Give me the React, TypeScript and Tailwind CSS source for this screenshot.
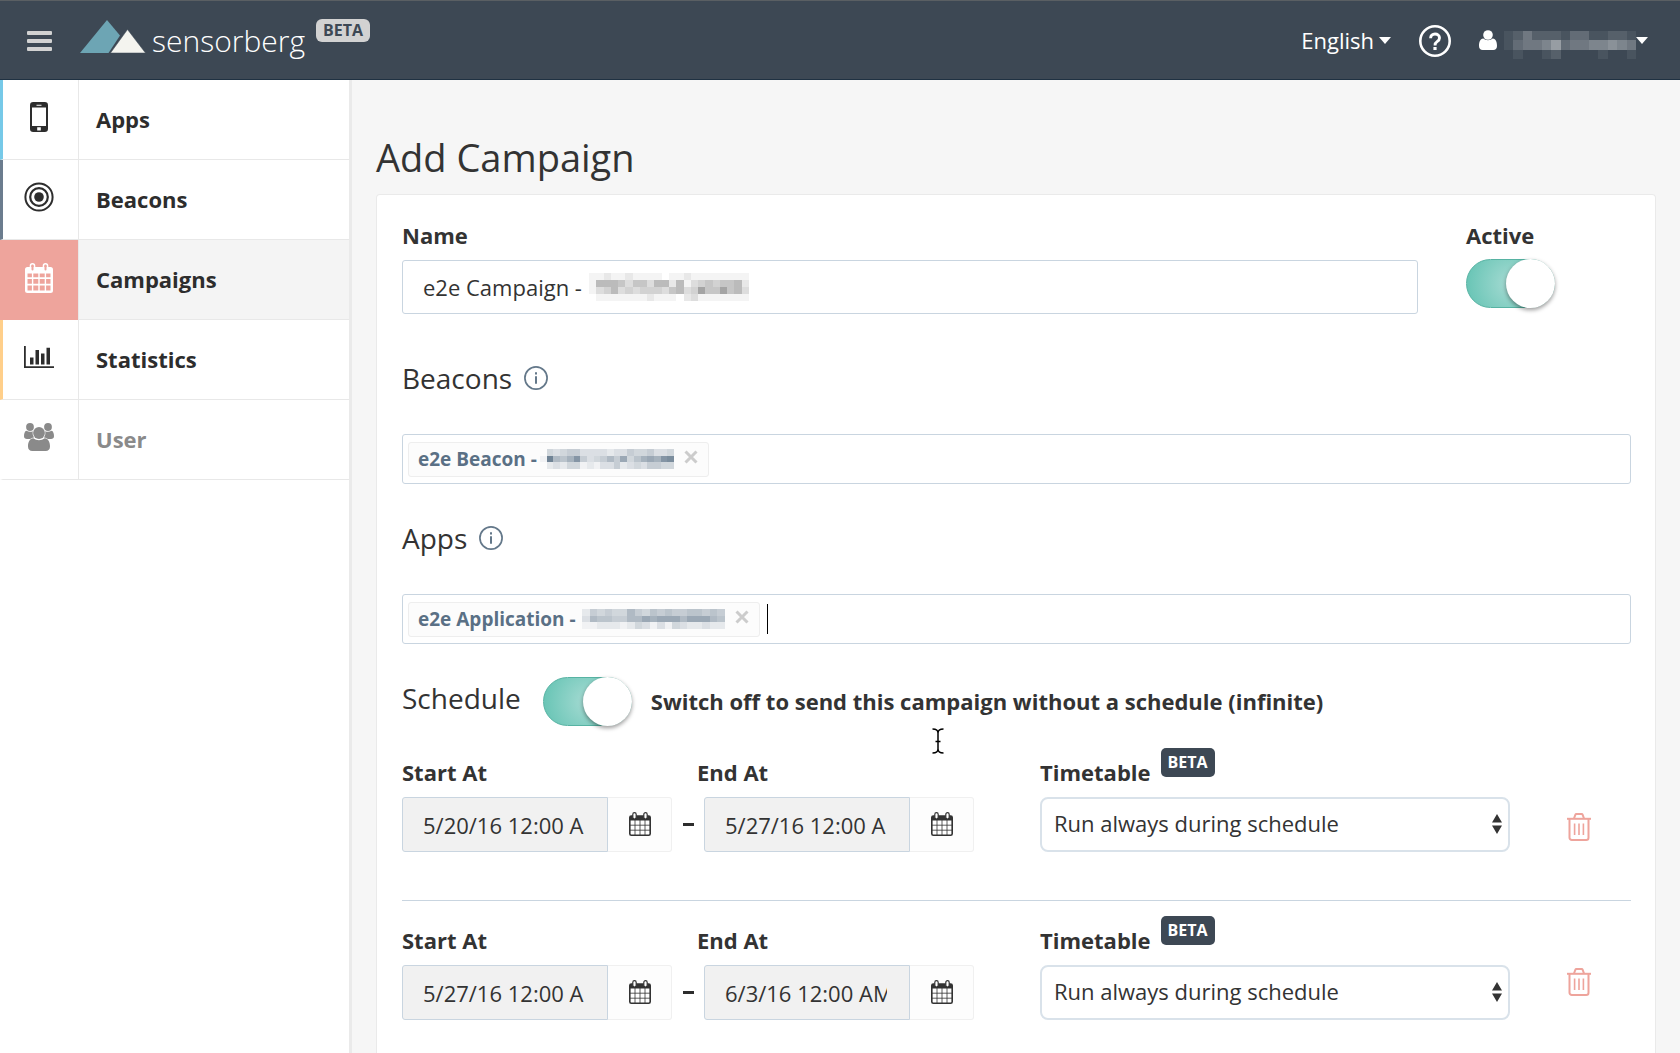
import React from "react";

type IconProps = { className?: string };

function PhoneIcon({ className }: IconProps) {
  return (
    <svg viewBox="0 0 18 30" className={className} fill="currentColor" aria-hidden="true">
      <path
        fillRule="evenodd"
        d="M3.2 0h11.6A3.2 3.2 0 0 1 18 3.2v23.6a3.2 3.2 0 0 1-3.2 3.2H3.2A3.2 3.2 0 0 1 0 26.800V3.200A3.200 3.200 0 0 1 3.200 0zM2 5.500v18.500h14V5.500zM6.500 2.700v1h5v-1zM7.200 25.300v3.200h3.600v-3.200z"
      />
    </svg>
  );
}

function TargetIcon({ className }: IconProps) {
  return (
    <svg viewBox="0 0 30 30" className={className} fill="none" stroke="currentColor" aria-hidden="true">
      <circle cx="15" cy="15" r="13.6" strokeWidth="2" />
      <circle cx="15" cy="15" r="8.800" strokeWidth="2.200" />
      <circle cx="15" cy="15" r="4.800" fill="currentColor" stroke="none" />
    </svg>
  );
}

function CalendarIcon({ className }: IconProps) {
  return (
    <svg viewBox="0 0 28 30" className={className} aria-hidden="true">
      <path
        fill="currentColor"
        fillRule="evenodd"
        d="M2.500 4h23A2.500 2.500 0 0 1 28 6.500v21a2.500 2.500 0 0 1-2.500 2.500h-23A2.500 2.500 0 0 1 0 27.500v-21A2.500 2.500 0 0 1 2.500 4zM2.500 10.500v3.800h4.400v-3.800zM8.300 10.500v3.800h5v-3.800zM14.700 10.500v3.800h5v-3.800zM21.100 10.500v3.800h4.400v-3.800zM2.500 16v4.800h4.400V16zM8.300 16v4.800h5V16zM14.700 16v4.800h5V16zM21.100 16v4.800h4.400V16zM2.500 22.500v5h4.400v-5zM8.300 22.500v5h5v-5zM14.700 22.500v5h5v-5zM21.100 22.500v5h4.400v-5z"
      />
      <rect x="5.500" y="0.800" width="4" height="7.500" rx="2" fill="none" stroke="currentColor" strokeWidth="1.600" />
      <rect x="18.500" y="0.800" width="4" height="7.500" rx="2" fill="none" stroke="currentColor" strokeWidth="1.600" />
      <rect x="6.500" y="2" width="2" height="5.500" rx="1" fill="#eea49c" />
      <rect x="19.500" y="2" width="2" height="5.500" rx="1" fill="#eea49c" />
    </svg>
  );
}

/* The lighter calendar of the date pickers: solid top bar, thin grid. */
function DateIcon({ className }: IconProps) {
  return (
    <svg viewBox="0 0 22 24" className={className} aria-hidden="true">
      <rect x="0.800" y="4" width="20.400" height="19.200" rx="1.500" fill="#ffffff" stroke="currentColor" strokeWidth="1.600" />
      <path d="M1 4h20v4.500H1z" fill="currentColor" />
      <path d="M6 8v15M11 8v15M16 8v15M1 13.200h20M1 18.200h20" stroke="currentColor" strokeWidth="0.800" />
      <rect x="3.800" y="0.700" width="3.400" height="6.300" rx="1.700" fill="#ffffff" stroke="currentColor" strokeWidth="1.200" />
      <rect x="14.800" y="0.700" width="3.400" height="6.300" rx="1.700" fill="#ffffff" stroke="currentColor" strokeWidth="1.200" />
    </svg>
  );
}

function ChartIcon({ className }: IconProps) {
  return (
    <svg viewBox="0 0 30 22" className={className} fill="currentColor" aria-hidden="true">
      <path d="M0 0h1.800v20.300H30V22H0zM6 11.500h3.500V18.500H6zM11.500 4H15v14.500h-3.500zM17 7.500h3.500v11H17zM22.500 1.800H26v16.700h-3.500z" />
    </svg>
  );
}

function GroupIcon({ className }: IconProps) {
  return (
    <svg viewBox="0 0 30 28" className={className} fill="currentColor" aria-hidden="true">
      <circle cx="6" cy="4" r="3.900" />
      <circle cx="24" cy="4" r="3.900" />
      <path d="M2.500 7.800C4.500 9 7 9.200 8.800 8.200c-.5 2.500 0 4.600 1.500 6.300-1.600 0-3 .5-4 1.500H3C1.200 16 0 15 0 13.200 0 10.800.7 8 2.500 7.800zM27.500 7.800c-2 1.200-4.500 1.400-6.300.4.500 2.500 0 4.600-1.500 6.300 1.600 0 3 .5 4 1.500H27c1.800 0 3-1 3-2.800 0-2.400-.7-5.200-2.500-5.400z" />
      <circle cx="15" cy="10" r="5.900" />
      <path d="M9.300 15.200c3.200 2.600 8.200 2.600 11.400 0 3.800.3 5.300 4.300 5.300 8.300 0 2.800-1.700 4.500-4.300 4.500H8.300C5.700 28 4 26.300 4 23.500c0-4 1.500-8 5.300-8.300z" />
    </svg>
  );
}

function PersonIcon({ className }: IconProps) {
  return (
    <svg viewBox="0 0 18 20" className={className} fill="currentColor" aria-hidden="true">
      <circle cx="9" cy="5" r="4.800" />
      <path d="M4.300 8.600c2.800 2.300 6.600 2.300 9.400 0C17 8.800 18 12.500 18 16c0 2.400-1.500 4-3.700 4H3.700C1.500 20 0 18.400 0 16c0-3.500 1-7.200 4.300-7.400z" />
    </svg>
  );
}

function InfoIcon() {
  return (
    <svg viewBox="0 0 24 24" className="size-6 text-[#64788a]" fill="none" stroke="currentColor" aria-hidden="true">
      <circle cx="12" cy="12" r="11.100" strokeWidth="1.700" />
      <path d="M12 10.200v7.600" strokeWidth="2" />
      <path d="M12 6.300v2.200" strokeWidth="2" />
    </svg>
  );
}

function HelpIcon() {
  return (
    <svg viewBox="0 0 32 32" className="size-8" fill="none" stroke="currentColor" aria-hidden="true">
      <circle cx="16" cy="16" r="14.700" strokeWidth="2.600" />
      <path d="M11.600 13.200c0-2.600 1.900-4.200 4.400-4.200s4.500 1.500 4.500 3.900c0 1.900-1.100 2.800-2.400 3.700-1.200.8-2 1.500-2 3.400v.6" strokeWidth="2.900" />
      <path d="M16 22v3" strokeWidth="3.200" />
    </svg>
  );
}

function TrashIcon() {
  return (
    <svg viewBox="0 0 24 28" className="h-7 w-6" fill="none" stroke="currentColor" strokeWidth="2" aria-hidden="true">
      <path d="M0 5.800h24" />
      <path d="M2.500 5.800v18.900a2.300 2.300 0 0 0 2.300 2.300h14.400a2.300 2.300 0 0 0 2.300-2.300V5.800" />
      <path d="M7 5.500l1.300-3.600a1.500 1.500 0 0 1 1.400-1h4.600a1.500 1.500 0 0 1 1.400 1L17 5.500" />
      <path d="M7.600 10.500v11.500M12 10.500v11.500M16.400 10.500v11.500" strokeWidth="1.600" />
    </svg>
  );
}

function Caret() {
  return (
    <svg viewBox="0 0 12 7" className="h-[7px] w-3" fill="currentColor" aria-hidden="true">
      <path d="M0 0h12L6 7z" />
    </svg>
  );
}

/* Redacted text: every character is the opacity of one block, in hex. */
function Mosaic({ rows, color, className }: { rows: string[]; color: string; className: string }) {
  const cols = rows[0].length;
  return (
    <svg
      viewBox={`0 0 ${cols} ${rows.length}`}
      preserveAspectRatio="none"
      shapeRendering="crispEdges"
      className={className}
      aria-hidden="true"
    >
      {rows.map((row, y) =>
        row.split("").map((c, x) => (
          <rect key={`${x}-${y}`} x={x} y={y} width="1" height="1" fill={color} opacity={parseInt(c, 16) / 15} />
        )),
      )}
    </svg>
  );
}

function Toggle({ id }: { id: string }) {
  return (
    <input
      id={id}
      type="checkbox"
      role="switch"
      defaultChecked
      className="flex h-[49px] w-[89px] shrink-0 appearance-none justify-end rounded-full border border-[#57b3a3] bg-[radial-gradient(circle_at_center,#a6dbd3_0%,#6cc6b7_85%)] before:-mt-px before:-mr-px before:size-[49px] before:rounded-full before:bg-white before:shadow-[0_2px_4px_rgba(0,0,0,0.4)] before:content-['']"
    />
  );
}

const navItems = [
  { label: "Apps", bar: "border-l-[#76c9e8]", icon: <PhoneIcon className="h-[30px] w-[18px]" /> },
  { label: "Beacons", bar: "border-l-[#6b7c8e]", icon: <TargetIcon className="size-[30px]" /> },
  { label: "Campaigns", bar: "border-l-[#eea49c]", active: true, icon: <CalendarIcon className="h-[30px] w-7" /> },
  { label: "Statistics", bar: "border-l-[#ffcf8a]", icon: <ChartIcon className="h-[22px] w-[30px]" /> },
  { label: "User", bar: "border-l-white", muted: true, icon: <GroupIcon className="h-7 w-[30px]" /> },
];

function Sidebar() {
  return (
    <nav className="w-[352px] shrink-0 border-r-[3px] border-[#eaeaea] bg-white">
      {navItems.map((item) => (
        <a
          key={item.label}
          href={`#${item.label.toLowerCase()}`}
          className={`flex h-20 ${item.muted ? "text-[#8a8a8a]" : "text-[#2d2d2d]"}`}
        >
          <span
            className={`flex w-[78px] items-center justify-center border-l-[3px] pr-[3px] pb-[5px] ${item.bar} ${
              item.active ? "bg-[#eea49c] text-white" : "border-b border-b-[#e8e8e8]"
            }`}
          >
            {item.icon}
          </span>
          <span
            className={`flex flex-1 items-center border-b border-l border-[#e8e8e8] pb-[2px] pl-[17px] text-[22px] leading-[30px] font-bold ${
              item.active ? "bg-[#f4f4f4]" : ""
            }`}
          >
            {item.label}
          </span>
        </a>
      ))}
    </nav>
  );
}

function Header() {
  return (
    <header className="flex h-20 items-center border-t border-b border-t-[#5a5f63] border-b-[#1f3142] bg-[#3d4854] pt-[2px] pr-8 pl-[27px] text-white">
      <button type="button" aria-label="Toggle menu" className="flex flex-col gap-1">
        <span className="h-1 w-[25px] rounded-[1px] bg-[#d2d2d2]" />
        <span className="h-1 w-[25px] rounded-[1px] bg-[#d2d2d2]" />
        <span className="h-1 w-[25px] rounded-[1px] bg-[#d2d2d2]" />
      </button>
      <a href="#home" className="ml-7 flex items-center">
        <svg viewBox="0 0 66 33" className="mb-[10px] h-[33px] w-[66px]" aria-hidden="true">
          <path d="M27 0 40 15.500 28.500 33H0z" fill="#6da5b4" />
          <path d="M47.500 9.500 65.500 33H30.500z" fill="#f4f4ef" stroke="#3d4854" strokeWidth="0.500" />
        </svg>
        <span className="ml-[6px] text-[30px] leading-10 font-light">sensorberg</span>
      </a>
      <span className="mb-[22px] ml-[11px] rounded-md bg-[#d2d2d2] px-[7px] text-[16px] leading-[23px] font-bold text-[#3d4854]">
        BETA
      </span>
      <div className="ml-auto flex items-center">
        <button type="button" className="flex items-center gap-[5px] pb-[2px] text-[22px] leading-[30px]">
          English
          <Caret />
        </button>
        <a href="#help" aria-label="Help" className="ml-7">
          <HelpIcon />
        </a>
        <button type="button" aria-label="Account" className="ml-7 flex items-center pb-[2px]">
          <PersonIcon className="h-5 w-[18px]" />
          <Mosaic
            className="ml-[7px] h-[38px] w-[132px]"
            color="#ffffff"
            rows={["00000000000000", "12422213311221", "13445734455654", "01001200001001"]}
          />
          <Caret />
        </button>
      </div>
    </header>
  );
}

function TagField({
  id,
  title,
  tag,
  rows,
  mosaicClass,
  focused,
}: {
  id: string;
  title: string;
  tag: string;
  rows: string[];
  mosaicClass: string;
  focused?: boolean;
}) {
  return (
    <section>
      <div className="mb-9 flex items-center gap-3">
        <label htmlFor={id} className="text-[28px] leading-10">
          {title}
        </label>
        <InfoIcon />
      </div>
      <div className="flex h-[50px] items-center rounded-[3px] border border-[#c9d5e0] bg-white px-[5px]">
        <span className="flex h-[35px] items-center rounded-[3px] border border-[#eeeeee] bg-[#fcfcfc] pr-[10px] pl-[9px] text-[19px] leading-7 font-bold text-[#5a7085]">
          {tag}
          <Mosaic className={mosaicClass} color="#5a7085" rows={rows} />
          <button type="button" aria-label={`Remove ${tag}`} className="mb-1 ml-[10px] text-[#cccccc]">
            <svg viewBox="0 0 14 14" className="size-[14px]" stroke="currentColor" strokeWidth="3" aria-hidden="true">
              <path d="M1.500 1.500l11 11M12.500 1.500l-11 11" />
            </svg>
          </button>
        </span>
        {focused && <span className="ml-[7px] h-[30px] w-px bg-black" />}
        <input id={id} type="text" className="h-full min-w-0 flex-1 bg-transparent pl-1 text-[20px] outline-none" />
      </div>
    </section>
  );
}

function DateField({ id, value }: { id: string; value: string }) {
  return (
    <>
      <input
        id={id}
        type="text"
        readOnly
        defaultValue={value}
        className="h-[55px] w-[206px] rounded-l-[3px] border border-[#c9d5e0] bg-[#f1f1f1] pr-[22px] pl-[20px] text-[22px] outline-none"
      />
      <button
        type="button"
        aria-label="Open calendar"
        className="flex h-[55px] w-16 items-center justify-center rounded-r-[3px] border border-l-0 border-[#f0f0f0] bg-[#fdfdfd] pb-[2px]"
      >
        <DateIcon className="h-6 w-[22px]" />
      </button>
    </>
  );
}

function ScheduleRow({ id, start, end, trashClass }: { id: string; start: string; end: string; trashClass: string }) {
  const labelClass = "mb-[10px] block text-[22px] leading-[30px] font-bold";
  return (
    <div className="grid grid-cols-[295fr_343fr_470fr_121fr]">
      <div>
        <label htmlFor={`${id}-start`} className={labelClass}>
          Start At
        </label>
        <div className="flex items-center">
          <DateField id={`${id}-start`} value={start} />
          <span className="ml-[11px] h-[3px] w-[11px] bg-[#2d2d2d]" />
        </div>
      </div>
      <div>
        <label htmlFor={`${id}-end`} className={labelClass}>
          End At
        </label>
        <div className="flex items-center pl-[7px]">
          <DateField id={`${id}-end`} value={end} />
        </div>
      </div>
      <div>
        <div className="flex">
          <label htmlFor={`${id}-timetable`} className={labelClass}>
            Timetable
          </label>
          <span className="-mt-[9px] ml-[10px] h-[29px] rounded-[5px] bg-[#3d4854] px-[7px] text-[16px] leading-[29px] font-bold text-white">
            BETA
          </span>
        </div>
        <div className="relative">
          <select
            id={`${id}-timetable`}
            className="h-[55px] w-full appearance-none rounded-lg border-2 border-[#d9e2ea] bg-white pr-10 pb-[2px] pl-3 text-[22px] outline-none"
          >
            <option>Run always during schedule</option>
          </select>
          <svg
            viewBox="0 0 10 20"
            className="pointer-events-none absolute top-[17px] right-2 h-5 w-[10px]"
            fill="currentColor"
            aria-hidden="true"
          >
            <path d="M5 0l5 8.500H0zM5 20l5-8.500H0z" />
          </svg>
        </div>
      </div>
      <div className={`flex pl-[57px] ${trashClass}`}>
        <button type="button" aria-label="Delete schedule" className="h-7 text-[#eea49c]">
          <TrashIcon />
        </button>
      </div>
    </div>
  );
}

export default function App() {
  return (
    <div className="flex min-h-screen flex-col bg-[#f6f6f6] font-['Open_Sans',sans-serif] text-[#333333]">
      <Header />
      <div className="flex flex-1">
        <Sidebar />
        <main className="flex flex-1 flex-col pt-[50px] pr-6 pl-6">
          <h1 className="mb-[10px] text-[38px] leading-[54px]">Add Campaign</h1>
          <form className="relative flex-1 rounded-t border border-b-0 border-[#eaeaea] bg-white pt-[25px] pr-6 pb-8 pl-[25px]">
            <div className="mb-11 flex gap-12">
              <div className="relative flex-1">
                <label htmlFor="name" className="mb-[10px] block text-[22px] leading-[30px] font-bold">
                  Name
                </label>
                <input
                  id="name"
                  type="text"
                  defaultValue="e2e Campaign -"
                  className="h-[54px] w-full rounded-[3px] border border-[#c9d5e0] bg-white px-[20px] text-[22px] outline-none"
                />
                <Mosaic
                  className="absolute bottom-[13px] left-[187px] h-7 w-40"
                  color="#555555"
                  rows={["1121121111011211111111", "1666535536626134545562", "1346343444356348558563", "0111111121110231111111"]}
                />
              </div>
              <div className="w-[165px]">
                <label htmlFor="active" className="mb-[9px] block text-[22px] leading-[30px] font-bold">
                  Active
                </label>
                <Toggle id="active" />
              </div>
            </div>

            <div className="flex flex-col gap-[34px]">
              <TagField
                id="beacons"
                title="Beacons"
                tag="e2e Beacon -"
                mosaicClass="ml-[3px] h-5 w-[134px]"
                rows={["04345533332335445334", "1d768b534575946898bc", "02324412133523435544"]}
              />
              <TagField
                id="apps"
                title="Apps"
                tag="e2e Application -"
                focused
                mosaicClass="ml-[6px] h-5 w-[143px]"
                rows={["2545447546565566565", "3766557798999799976", "1122212431314322322"]}
              />
              <div className="flex h-10 items-center">
                <span className="text-[28px] leading-10">Schedule</span>
                <span className="ml-[22px] flex items-center gap-[19px] pt-[6px]">
                  <Toggle id="schedule" />
                  <label htmlFor="schedule" className="text-[22px] leading-[30px] font-bold">
                    Switch off to send this campaign without a schedule (infinite)
                  </label>
                </span>
              </div>
            </div>

            <div className="mt-[39px]">
              <ScheduleRow id="first" start="5/20/16 12:00 AM" end="5/27/16 12:00 AM" trashClass="pt-14" />
              <hr className="mt-12 mb-6 border-[#c9d5e0]" />
              <ScheduleRow id="second" start="5/27/16 12:00 AM" end="6/3/16 12:00 AM" trashClass="pt-[43px]" />
            </div>

            <svg
              viewBox="0 0 12 26"
              className="pointer-events-none absolute top-[533px] left-[555px] h-[26px] w-3"
              fill="none"
              stroke="#000000"
              strokeWidth="1.500"
              aria-hidden="true"
            >
              <path d="M.5 1C4 1 6 2 6 5v16c0 3-2 4-5.500 4M11.500 1C8 1 6 2 6 5M6 21c0 3 2 4 5.500 4M3.500 13.500h5" />
            </svg>
          </form>
        </main>
      </div>
    </div>
  );
}
